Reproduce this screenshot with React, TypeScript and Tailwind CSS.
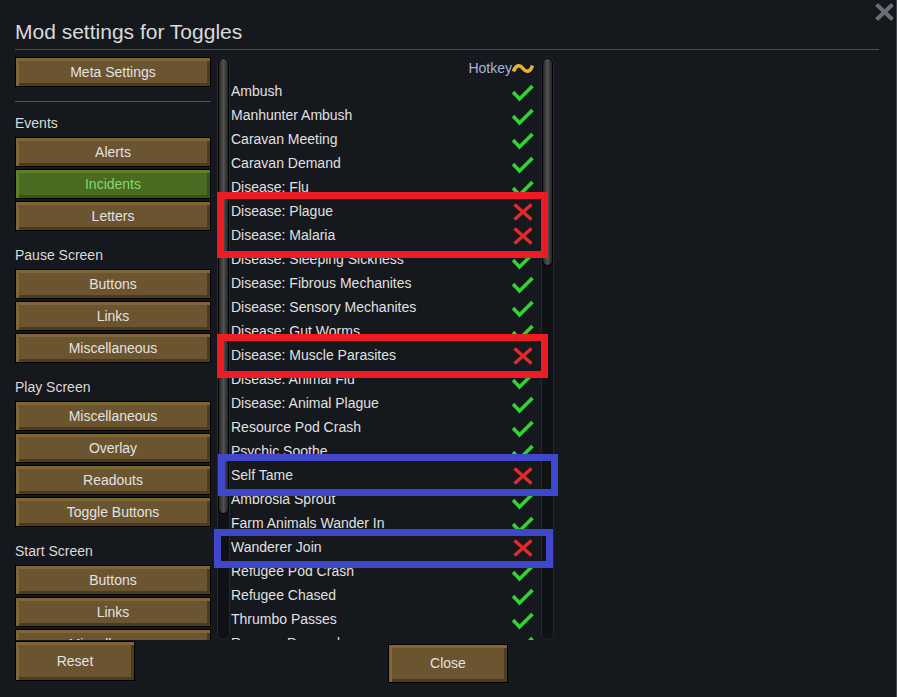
import React from "react";

type Row = [string, boolean];

const rows: Row[] = [
  ["Ambush", true],
  ["Manhunter Ambush", true],
  ["Caravan Meeting", true],
  ["Caravan Demand", true],
  ["Disease: Flu", true],
  ["Disease: Plague", false],
  ["Disease: Malaria", false],
  ["Disease: Sleeping Sickness", true],
  ["Disease: Fibrous Mechanites", true],
  ["Disease: Sensory Mechanites", true],
  ["Disease: Gut Worms", true],
  ["Disease: Muscle Parasites", false],
  ["Disease: Animal Flu", true],
  ["Disease: Animal Plague", true],
  ["Resource Pod Crash", true],
  ["Psychic Soothe", true],
  ["Self Tame", false],
  ["Ambrosia Sprout", true],
  ["Farm Animals Wander In", true],
  ["Wanderer Join", false],
  ["Refugee Pod Crash", true],
  ["Refugee Chased", true],
  ["Thrumbo Passes", true],
  ["Ransom Demand", true],
];

function Btn({ label, green = false, className = "" }: { label: string; green?: boolean; className?: string }) {
  return (
    <div
      className={`flex shrink-0 items-center justify-center border border-black text-[14px] ${
        green
          ? "bg-[#4b6b23] text-[#84d86b] shadow-[inset_3px_3px_0_#5d802e,inset_-3px_-3px_0_#37511a]"
          : "bg-[#6b5430] text-[#e2e2e2] shadow-[inset_3px_3px_0_#7f6538,inset_-3px_-3px_0_#4c3b1f]"
      } ${className}`}
    >
      {label}
    </div>
  );
}

function Label({ text, first = false }: { text: string; first?: boolean }) {
  return (
    <div className={`h-[22px] shrink-0 text-[14px] leading-[22px] text-[#dadada] mb-[3px] ${first ? "mt-[10px]" : "mt-[11px]"}`}>
      {text}
    </div>
  );
}

function Scrollbar({ thumb }: { thumb: string }) {
  return (
    <div className="w-[13px] h-[583px] shrink-0 rounded-full bg-[#0f1114] border border-[#24272b]">
      <div className={`${thumb} rounded-full border border-black bg-linear-to-r from-[#262626] via-[#525252] to-[#232323]`} />
    </div>
  );
}

function Check() {
  return (
    <svg width="22" height="18" viewBox="0 0 22 18" className="mt-[5px] shrink-0">
      <polyline points="1,8 7.5,15 20.5,2" fill="none" stroke="#2fd42f" strokeWidth="3.6" strokeLinecap="butt" strokeLinejoin="miter" />
    </svg>
  );
}

function Cross() {
  return (
    <svg width="22" height="18" viewBox="0 0 22 18" className="mt-[4px] shrink-0">
      <path d="M2.5 1.5 L19.5 16.5 M19.5 1.5 L2.5 16.5" fill="none" stroke="#de2a2a" strokeWidth="3.6" />
    </svg>
  );
}

export default function App() {
  return (
    <div className="relative w-[897px] h-[697px] overflow-hidden bg-[#15181d] border-r border-[#454951] font-['Liberation_Sans',Arial,sans-serif] text-[#dedede]">
      {/* Title */}
      <div className="pl-[15px] pr-[17px] pt-[20px]">
        <h1 className="text-[21px] leading-[24px] text-[#dadada]">Mod settings for Toggles</h1>
        <div className="mt-[5px] h-px bg-[#4a4d52]" />
      </div>

      {/* Close X */}
      <svg width="19" height="18" viewBox="0 0 19 18" className="absolute left-[875px] top-[3px]">
        <path d="M1.5 1.5 L17.5 16.5 M17.5 1.5 L1.5 16.5" stroke="#6a6d73" strokeWidth="4" fill="none" />
      </svg>

      {/* Main */}
      <div className="flex items-start ml-[15px] mt-[7px]">
        <div className="flex flex-col w-[196px] h-[583px] overflow-hidden">
          <Btn label="Meta Settings" className="h-[30px] mb-[2px]" />
          <div className="mt-[12px] h-px bg-[#4f5257] shrink-0" />
          <Label text="Events" first />
          <Btn label="Alerts" className="h-[30px] mb-[2px]" />
          <Btn label="Incidents" green className="h-[30px] mb-[2px]" />
          <Btn label="Letters" className="h-[30px] mb-[2px]" />
          <Label text="Pause Screen" />
          <Btn label="Buttons" className="h-[30px] mb-[2px]" />
          <Btn label="Links" className="h-[30px] mb-[2px]" />
          <Btn label="Miscellaneous" className="h-[30px] mb-[2px]" />
          <Label text="Play Screen" />
          <Btn label="Miscellaneous" className="h-[30px] mb-[2px]" />
          <Btn label="Overlay" className="h-[30px] mb-[2px]" />
          <Btn label="Readouts" className="h-[30px] mb-[2px]" />
          <Btn label="Toggle Buttons" className="h-[30px] mb-[2px]" />
          <Label text="Start Screen" />
          <Btn label="Buttons" className="h-[30px] mb-[2px]" />
          <Btn label="Links" className="h-[30px] mb-[2px]" />
          <Btn label="Miscellaneous" className="h-[30px] mb-[2px]" />
        </div>

        <div className="ml-[6px]">
          <Scrollbar thumb="h-[456px]" />
        </div>

        <div className="w-[311px] h-[583px] overflow-hidden pl-[1px] pr-[7px]">
          <div className="flex h-[22px] items-center justify-end">
            <span className="text-[14px] text-[#aab1dc]">Hotkey</span>
            <svg width="22" height="13" viewBox="0 0 22 13" className="shrink-0">
              <path d="M1.5 9.5 C4 2.5 8 2.5 11 6.5 S18 10.5 20.5 3.5" fill="none" stroke="#e2b23a" strokeWidth="3.6" />
            </svg>
          </div>
          {rows.map(([name, on]) => (
            <div key={name} className="flex h-[24px] items-start justify-between">
              <span className="text-[14px] leading-[24px] text-[#e0e0e0] whitespace-nowrap">{name}</span>
              {on ? <Check /> : <Cross />}
            </div>
          ))}
        </div>

        <Scrollbar thumb="h-[208px]" />
      </div>

      {/* Bottom buttons */}
      <div className="flex items-start">
        <Btn label="Reset" className="ml-[15px] mt-[1px] w-[120px] h-[40px]" />
        <Btn label="Close" className="ml-[253px] mt-[4px] w-[120px] h-[39px]" />
      </div>

      {/* Screenshot annotations */}
      <div className="absolute left-[217px] top-[192px] w-[331px] h-[66px] border-[7px] border-[#ed1c24]" />
      <div className="absolute left-[217px] top-[334px] w-[331px] h-[44px] border-[7px] border-[#ed1c24]" />
      <div className="absolute left-[218px] top-[454px] w-[340px] h-[42px] border-[7px] border-[#3f48cc]" />
      <div className="absolute left-[214px] top-[529px] w-[339px] h-[39px] border-[7px] border-[#3f48cc]" />
    </div>
  );
}
